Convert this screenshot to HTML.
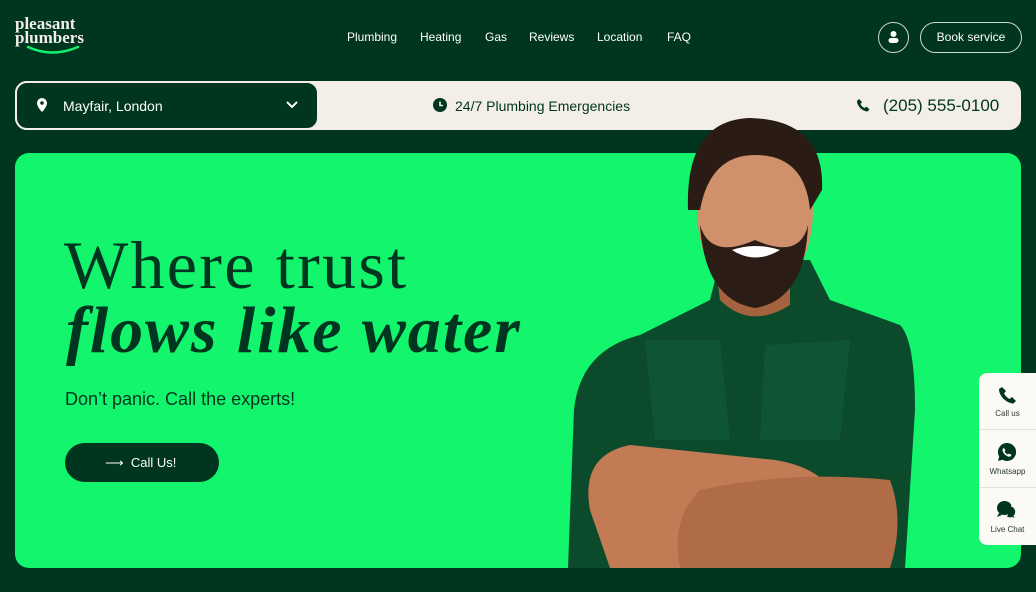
<!DOCTYPE html>
<html><head><meta charset="utf-8"><style>
*{margin:0;padding:0;box-sizing:border-box}
body{width:1036px;height:592px;background:#003520;font-family:"Liberation Sans",sans-serif;position:relative;overflow:hidden;color:#fff}
.abs{position:absolute}
.nav a{position:absolute;top:30px;font-size:12px;color:#fff}
</style></head><body>
<div class="abs" style="left:15px;top:17px;font-family:'Liberation Serif',serif;font-size:17px;line-height:14px;font-weight:bold;color:#f3efe6">pleasant<br>plumbers</div>
<svg class="abs" style="left:26px;top:44px" width="56" height="12"><path d="M2 3 Q26 14 52 3" stroke="#14f26d" stroke-width="2.5" fill="none" stroke-linecap="round"/></svg>
<div class="nav">
<a style="left:347px">Plumbing</a><a style="left:420px">Heating</a><a style="left:485px">Gas</a><a style="left:529px">Reviews</a><a style="left:597px">Location</a><a style="left:667px">FAQ</a>
</div>
<div class="abs" style="left:878px;top:22px;width:31px;height:31px;border:1px solid #cfd8cf;border-radius:50%"></div>
<svg class="abs" style="left:887px;top:30px" width="13" height="14"><circle cx="6.5" cy="4" r="3" fill="#fff"/><rect x="1.5" y="8" width="10" height="5" rx="2.5" fill="#fff"/></svg>
<div class="abs" style="left:920px;top:22px;width:102px;height:31px;border:1px solid #cfd8cf;border-radius:16px;font-size:12px;text-align:center;line-height:29px">Book service</div>

<div class="abs" style="left:15px;top:81px;width:1006px;height:49px;background:#f3efe6;border-radius:12px"></div>
<div class="abs" style="left:15px;top:81px;width:304px;height:49px;background:#003520;border:2px solid #f3efe6;border-radius:12px"></div>
<svg class="abs" style="left:36px;top:97px" width="12" height="16"><path d="M6 1a5 5 0 0 0-5 5c0 4 5 9 5 9s5-5 5-9a5 5 0 0 0-5-5z" fill="#fff"/><circle cx="6" cy="6" r="1.8" fill="#003520"/></svg>
<div class="abs" style="left:63px;top:98px;font-size:14px">Mayfair, London</div>
<svg class="abs" style="left:285px;top:100px" width="14" height="10"><path d="M2 2l5 5 5-5" stroke="#fff" stroke-width="2" fill="none"/></svg>
<svg class="abs" style="left:433px;top:98px" width="14" height="14"><circle cx="7" cy="7" r="7" fill="#003520"/><path d="M7 3.5V7.5H10" stroke="#f3efe6" stroke-width="1.6" fill="none"/></svg>
<div class="abs" style="left:455px;top:98px;font-size:14px;color:#003520">24/7 Plumbing Emergencies</div>
<svg class="abs" style="left:856px;top:98px" width="14" height="14"><path d="M3 1l3 3-1.5 2c1 2 2 3 4 4l2-1.5 3 3-2 2C6 13 1 8 1 3z" fill="#003520"/></svg>
<div class="abs" style="left:883px;top:96px;font-size:17px;color:#003520">(205) 555-0100</div>

<div class="abs" style="left:15px;top:153px;width:1006px;height:415px;background:#12f56c;border-radius:14px"></div>
<div class="abs" style="left:64px;top:229px;font-family:'Liberation Serif',serif;font-size:68px;color:#003520;letter-spacing:2.3px;line-height:72px">Where trust</div>
<div class="abs" style="left:66px;top:295px;font-family:'Liberation Serif',serif;font-size:66px;font-weight:bold;font-style:italic;color:#003520;letter-spacing:1.9px;line-height:72px">flows like water</div>
<div class="abs" style="left:65px;top:389px;font-size:18px;color:#003520">Don’t panic. Call the experts!</div>
<div class="abs" style="left:65px;top:443px;width:154px;height:39px;background:#003520;border-radius:20px;font-size:13px;line-height:39px;padding-left:40px">⟶&nbsp;&nbsp;Call Us!</div>

<svg class="abs" style="left:560px;top:110px" width="360" height="458">
<path d="M8 458 L14 300 Q20 240 80 225 L150 190 L160 150 L250 150 L270 190 L340 215 Q355 230 355 300 L345 458 Z" fill="#0b4a2b"/>
<path d="M85 230 L95 330 L170 330 L160 230 Z" fill="#0f5534"/>
<path d="M205 235 L200 330 L280 330 L290 230 Z" fill="#0f5534"/>
<path d="M30 400 Q20 345 70 335 L215 350 Q280 360 290 420 L285 458 L50 458 Z" fill="#c27b55"/>
<path d="M140 380 Q230 360 330 370 Q345 410 330 458 L120 458 Q110 410 140 380 Z" fill="#b06c47"/>
<path d="M230 150 L155 150 L160 190 Q190 220 230 195 Z" fill="#a4623f"/>
<ellipse cx="195" cy="100" rx="58" ry="90" fill="#cf906b"/>
<path d="M140 115 Q145 190 195 198 Q245 190 248 115 Q240 150 195 130 Q150 150 140 115 Z" fill="#2b1c15"/>
<path d="M172 140 Q195 155 220 140 Q195 132 172 140 Z" fill="#fff"/>
<path d="M128 100 Q125 10 190 8 Q265 10 262 80 L250 100 Q245 45 195 45 Q150 45 140 100 Z" fill="#2a1b15"/>
</svg>

<div class="abs" style="left:979px;top:373px;width:57px;height:172px;background:#fbfaf5;border-radius:8px 0 0 8px"></div>
<div class="abs" style="left:979px;top:429px;width:57px;height:1px;background:#e2e2dc"></div>
<div class="abs" style="left:979px;top:487px;width:57px;height:1px;background:#e2e2dc"></div>
<svg class="abs" style="left:998px;top:386px" width="18" height="18"><path d="M4 1l4 4-2 2.5c1.5 2.5 3 4 5.5 5.5L14 11l4 4-2.5 2.5C8 17 1 10 1 3z" fill="#003520"/></svg>
<div class="abs" style="left:979px;top:409px;width:57px;text-align:center;font-size:8px;color:#2a3a30">Call us</div>
<svg class="abs" style="left:997px;top:442px" width="20" height="20"><path d="M10 1a9 9 0 0 0-7.8 13.5L1 19l4.6-1.2A9 9 0 1 0 10 1z" fill="#003520"/><path d="M7 6l1.5 2.5-1 1c.8 1.5 2 2.5 3.5 3l1-1 2.5 1.5c-.5 1.5-2 2-3.5 1.5C8.5 13.5 6 11 5.5 8.5 5.5 7 6 6.3 7 6z" fill="#fff"/></svg>
<div class="abs" style="left:979px;top:467px;width:57px;text-align:center;font-size:8px;color:#2a3a30">Whatsapp</div>
<svg class="abs" style="left:996px;top:500px" width="22" height="20"><ellipse cx="8.5" cy="8" rx="7.5" ry="7" fill="#003520"/><path d="M3 13l-2 4 5-2z" fill="#003520"/><path d="M15 6a6 6 0 0 1 3 10l2 3-4-1.5A6 6 0 0 1 11 17" fill="#003520" stroke="#fbfaf5" stroke-width="1"/></svg>
<div class="abs" style="left:979px;top:525px;width:57px;text-align:center;font-size:8px;color:#2a3a30">Live Chat</div>
</body></html>
